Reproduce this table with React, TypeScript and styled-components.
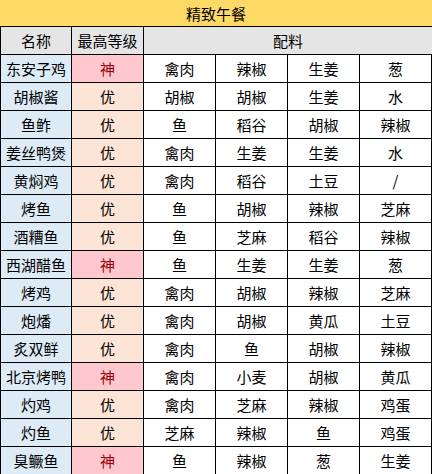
import React from "react";
import styled, { createGlobalStyle } from "styled-components";

const GlobalStyle = createGlobalStyle`
  html, body {
    margin: 0;
    padding: 0;
    background: #ffffff;
  }
  body {
    font-family: "Noto Sans CJK SC", "Noto Sans", sans-serif;
  }
`;

type Level = "神" | "优";

interface Dish {
  name: string;
  level: Level;
  items: string[];
}

const dishes: Dish[] = [
  { name: "东安子鸡", level: "神", items: ["禽肉", "辣椒", "生姜", "葱"] },
  { name: "胡椒酱", level: "优", items: ["胡椒", "胡椒", "生姜", "水"] },
  { name: "鱼鲊", level: "优", items: ["鱼", "稻谷", "胡椒", "辣椒"] },
  { name: "姜丝鸭煲", level: "优", items: ["禽肉", "生姜", "生姜", "水"] },
  { name: "黄焖鸡", level: "优", items: ["禽肉", "稻谷", "土豆", "/"] },
  { name: "烤鱼", level: "优", items: ["鱼", "胡椒", "辣椒", "芝麻"] },
  { name: "酒糟鱼", level: "优", items: ["鱼", "芝麻", "稻谷", "辣椒"] },
  { name: "西湖醋鱼", level: "神", items: ["鱼", "生姜", "生姜", "葱"] },
  { name: "烤鸡", level: "优", items: ["禽肉", "胡椒", "辣椒", "芝麻"] },
  { name: "炮燔", level: "优", items: ["禽肉", "胡椒", "黄瓜", "土豆"] },
  { name: "炙双鲜", level: "优", items: ["禽肉", "鱼", "胡椒", "辣椒"] },
  { name: "北京烤鸭", level: "神", items: ["禽肉", "小麦", "胡椒", "黄瓜"] },
  { name: "灼鸡", level: "优", items: ["禽肉", "芝麻", "辣椒", "鸡蛋"] },
  { name: "灼鱼", level: "优", items: ["芝麻", "辣椒", "鱼", "鸡蛋"] },
  { name: "臭鳜鱼", level: "神", items: ["鱼", "辣椒", "葱", "生姜"] },
];

const App = () => {
  return (
    <>
      <GlobalStyle />
      <Sheet>
        <Title>精致午餐</Title>
        <HeadCell first>名称</HeadCell>
        <HeadCell>最高等级</HeadCell>
        <HeadCell span={4}>配料</HeadCell>
        {dishes.map((d, i) => (
          <React.Fragment key={i}>
            <NameCell>{d.name}</NameCell>
            <LevelCell top={d.level === "神"}>{d.level}</LevelCell>
            {d.items.map((it, j) => (
              <Cell key={j}>{it}</Cell>
            ))}
          </React.Fragment>
        ))}
      </Sheet>
    </>
  );
};

export default App;

const Sheet = styled.div`
  width: 432px;
  height: 474px;
  overflow: hidden;
  display: grid;
  grid-template-columns: 72px 72px 72px 72px 72px 72px;
  grid-auto-rows: 28px;
  grid-template-rows: 27px;
  font-size: 15px;
  color: #000000;
`;

const Title = styled.div`
  grid-column: 1 / span 6;
  background: #ffd966;
  border-bottom: 1px solid #000;
  display: flex;
  align-items: center;
  justify-content: center;
  box-sizing: border-box;
`;

const BaseCell = styled.div`
  box-sizing: border-box;
  border-right: 1px solid #000;
  border-bottom: 1px solid #000;
  display: flex;
  align-items: center;
  justify-content: center;
  white-space: nowrap;
  line-height: 1;
`;

const HeadCell = styled(BaseCell)<{ span?: number; first?: boolean }>`
  grid-column: ${(p) => (p.span ? `span ${p.span}` : "auto")};
  background: #e5e5e5;
  border-left: ${(p) => (p.first ? "1px solid #000" : "none")};
  border-right: ${(p) => (p.span ? "none" : "1px solid #000")};
`;

const NameCell = styled(BaseCell)`
  background: #ddebf7;
  border-left: 1px solid #000;
`;

const LevelCell = styled(BaseCell)<{ top: boolean }>`
  background: ${(p) => (p.top ? "#ffc7ce" : "#fce4d6")};
  color: ${(p) => (p.top ? "#9c0006" : "#000000")};
`;

const Cell = styled(BaseCell)`
  background: #ffffff;
`;
